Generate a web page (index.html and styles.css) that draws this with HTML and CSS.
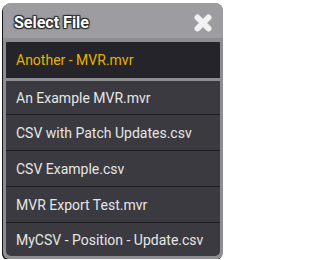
FILE: index.html
```html
<!DOCTYPE html>
<html>
<head>
<meta charset="utf-8">
<link rel="stylesheet" href="styles.css">
</head>
<body>
<div class="dialog">
  <div class="header">
    <span class="title">Select File</span>
    <svg class="close" width="20" height="20" viewBox="0 0 20 20">
      <path d="M4.5 4.5 L15.5 15.5 M15.5 4.5 L4.5 15.5" stroke="#f2f2f2" stroke-width="6" stroke-linecap="round"/>
    </svg>
  </div>
  <div class="list">
    <div class="row selected">Another - MVR.mvr</div>
    <div class="row first">An Example MVR.mvr</div>
    <div class="row">CSV with Patch Updates.csv</div>
    <div class="row">CSV Example.csv</div>
    <div class="row">MVR Export Test.mvr</div>
    <div class="row last">MyCSV - Position - Update.csv</div>
  </div>
</div>
</body>
</html>
```
FILE: styles.css
```css
html, body {
  margin: 0;
  padding: 0;
  background: #ffffff;
}
body {
  padding: 3px 0 0 3px;
}
.dialog {
  width: 220px;
  height: 256px;
  box-sizing: border-box;
  background: #8d8d92;
  border-radius: 8px 8px 6px 6px;
  box-shadow: -1px 1px 0 #151515;
  overflow: hidden;
  display: flex;
  flex-direction: column;
  font-family: Roboto, "Liberation Sans", sans-serif;
}
.header {
  height: 35px;
  box-sizing: border-box;
  flex: none;
  background: #9c9ca1;
  display: flex;
  align-items: center;
  justify-content: space-between;
  padding: 4px 10px 0 11px;
}
.title {
  font-weight: bold;
  font-size: 16px;
  color: #ffffff;
  text-shadow: 0 0 1px #222, 1px 1px 1px #2a2a2a, -1px -1px 1px #2a2a2a, 1px -1px 1px #2a2a2a, -1px 1px 1px #2a2a2a;
}
.close {
  display: block;
}
.list {
  margin: 4px 3px 3px 3px;
  flex: 1;
  background: #3a3a40;
  border-radius: 0 0 5px 5px;
  display: flex;
  flex-direction: column;
}
.row {
  height: 35px;
  display: flex;
  align-items: center;
  padding-left: 10px;
  font-size: 14px;
  color: #e6e6e6;
  border-bottom: 1px solid #1d1d21;
  flex: none;
  white-space: pre;
}
.row.selected {
  height: 36px;
  background: #24242a;
  color: #e6b400;
  border-bottom: 3px solid #8d8d92;
  border-radius: 2px 2px 0 0;
}
.row.first {
  height: 33px;
}
.row.last {
  height: 33px;
  border-bottom: none;
}
```
